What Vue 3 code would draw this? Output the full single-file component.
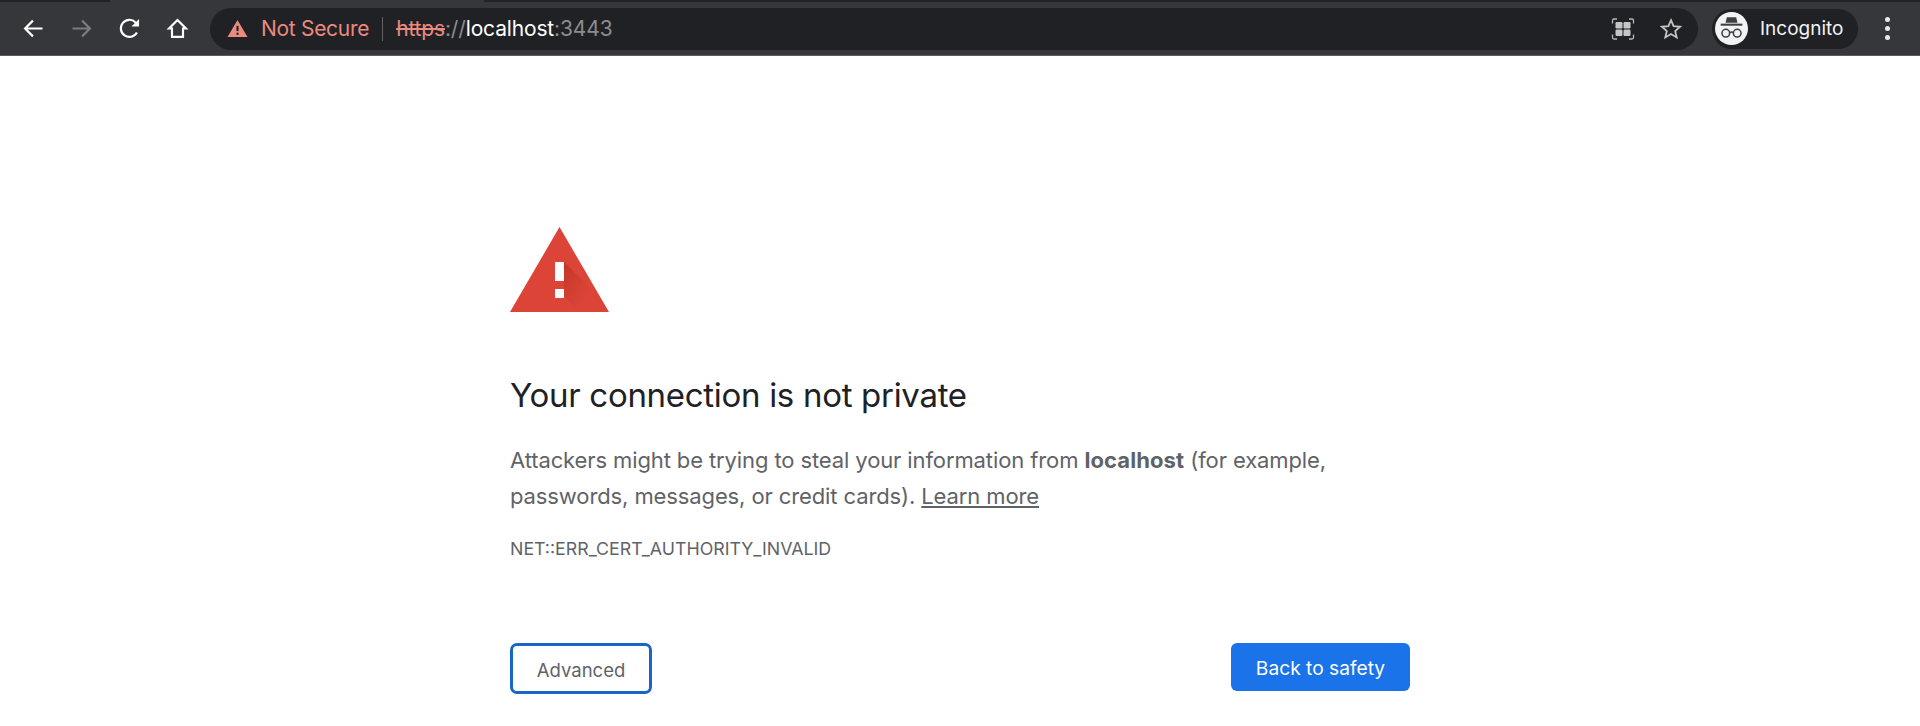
<template>
  <div class="page">
    <header class="toolbar">
      <div class="tabs-edge">
        <span class="tabs-edge__dark tabs-edge__dark--left"></span>
        <span class="tabs-edge__dark tabs-edge__dark--right"></span>
      </div>
      <div class="toolbar__row">
        <nav class="nav">
          <button type="button" class="nav__btn" aria-label="Back">
            <svg viewBox="0 0 24 24" width="27" height="27"><path d="M20 12H5M11.500 5 4.500 12l7 7" fill="none" stroke="#fff" stroke-width="1.900" /></svg>
          </button>
          <button type="button" class="nav__btn" aria-label="Forward">
            <svg viewBox="0 0 24 24" width="27" height="27"><path d="M4 12h15M12.500 5l7 7-7 7" fill="none" stroke="#7b7c7f" stroke-width="1.900" /></svg>
          </button>
          <button type="button" class="nav__btn" aria-label="Reload">
            <svg viewBox="0 0 24 24" width="27" height="27"><path d="M18.600 15.500A7.600 7.600 0 1 1 17.400 6.600L19.500 8.600" fill="none" stroke="#fff" stroke-width="1.900" /><path d="M20.500 3.500v6.800h-6.800z" fill="#fff" /></svg>
          </button>
          <button type="button" class="nav__btn" aria-label="Home">
            <svg viewBox="0 0 24 24" width="27" height="27"><path d="M12 4.500 4.500 12h2.600v7.500h9.800V12h2.600z" fill="none" stroke="#fff" stroke-width="1.900" /></svg>
          </button>
        </nav>

        <div class="omnibox">
          <svg class="omnibox__warn" viewBox="0 0 20 18" width="21" height="19">
            <path d="M10 1 19.500 17H.5z" fill="#ea8a80" />
            <rect x="9" y="6.500" width="2" height="5" fill="#202124" />
            <rect x="9" y="13" width="2" height="2" fill="#202124" />
          </svg>
          <span class="omnibox__status">Not Secure</span>
          <span class="omnibox__sep"></span>
          <span class="omnibox__url"><s class="omnibox__scheme">https</s><span class="omnibox__dim">://</span><span class="omnibox__host">localhost</span><span class="omnibox__dim">:3443</span></span>
          <span class="omnibox__spacer"></span>
          <svg class="omnibox__icon" viewBox="0 0 24 24" width="24" height="24">
            <path d="M1.500 6.500V3.500A1.500 1.500 0 0 1 3 2h3M18 2h3a1.500 1.500 0 0 1 1.500 1.500v3M1.500 17.500v3A1.500 1.500 0 0 0 3 22h3M18 22h3a1.500 1.500 0 0 0 1.500-1.500v-3" fill="none" stroke="#b5b6b8" stroke-width="1.300" />
            <rect x="4.500" y="5" width="7" height="6.500" rx="1.200" fill="#c4c5c7" />
            <rect x="12.500" y="5" width="7" height="6.500" rx="1.200" fill="#c4c5c7" />
            <rect x="4.500" y="12.500" width="7" height="6.500" rx="1.200" fill="#c4c5c7" />
            <rect x="12.500" y="12.500" width="7" height="6.500" rx="1.200" fill="#c4c5c7" />
          </svg>
          <svg class="omnibox__icon omnibox__star" viewBox="0 0 24 24" width="24" height="24">
            <path d="m12 3.200 2.600 6 6.500.6-4.900 4.300 1.500 6.400L12 17.100l-5.700 3.400 1.500-6.400-4.900-4.300 6.500-.6z" fill="none" stroke="#c4c5c7" stroke-width="1.800" />
          </svg>
        </div>

        <div class="profile">
          <span class="profile__avatar">
            <svg viewBox="0 0 30 30" width="31" height="31">
              <path d="M10.500 4h9l1.300 5.500H9.200z" fill="#3c4043" />
              <rect x="4.500" y="10.300" width="21" height="2" fill="#3c4043" />
              <circle cx="9.500" cy="19.500" r="3.700" fill="none" stroke="#3c4043" stroke-width="1.500" />
              <circle cx="20.500" cy="19.500" r="3.700" fill="none" stroke="#3c4043" stroke-width="1.500" />
              <path d="M13 19c1.300-.9 2.700-.9 4 0" fill="none" stroke="#3c4043" stroke-width="1.500" />
            </svg>
          </span>
          <span class="profile__label">Incognito</span>
        </div>

        <button type="button" class="menu" aria-label="Menu">
          <span></span><span></span><span></span>
        </button>
      </div>
    </header>

    <main class="interstitial">
      <svg class="interstitial__icon" viewBox="0 0 99 85" width="99" height="85">
        <defs>
          <linearGradient id="warn-shadow" x1="0" y1="0" x2="1" y2="1">
            <stop offset="0" stop-color="#a52714" stop-opacity=".45" />
            <stop offset=".65" stop-color="#a52714" stop-opacity="0" />
          </linearGradient>
        </defs>
        <path d="M49.500 0 99 85H0z" fill="#db4437" />
        <path d="M54 35 90 71v14H70L54 69z" fill="url(#warn-shadow)" />
        <rect x="45" y="35" width="9" height="19" fill="#fff" />
        <rect x="45" y="62" width="9" height="9" fill="#fff" />
      </svg>

      <h1 class="interstitial__title">Your connection is not private</h1>
      <p class="interstitial__text">
        Attackers might be trying to steal your information from <strong>localhost</strong> (for example,
        passwords, messages, or credit cards). <a class="interstitial__link">Learn more</a>
      </p>
      <p class="interstitial__code">NET::ERR_CERT_AUTHORITY_INVALID</p>

      <div class="interstitial__actions">
        <button type="button" class="btn btn--advanced">Advanced</button>
        <button type="button" class="btn btn--primary">Back to safety</button>
      </div>
    </main>
  </div>
</template>

<script setup>
</script>

<style>
html,
body {
  background: #fff;
}
</style>

<style scoped>
.page {
  height: 726px;
  overflow: hidden;
  font-family: "Inter", "Liberation Sans", sans-serif;
  background: #fff;
}

.toolbar {
  height: 56px;
  box-sizing: border-box;
  background: #36373b;
  border-bottom: 1px solid #5a5b5e;
}

.tabs-edge {
  display: flex;
  justify-content: space-between;
  height: 2px;
}

.tabs-edge__dark {
  display: block;
  height: 2px;
  background: #222327;
}

.tabs-edge__dark--left {
  width: 110px;
}

.tabs-edge__dark--right {
  width: 1436px;
}

.toolbar__row {
  display: flex;
  align-items: center;
  height: 53px;
  padding-left: 20px;
}

.nav {
  display: flex;
  gap: 21px;
}

.nav__btn {
  width: 27px;
  height: 27px;
  padding: 0;
  border: 0;
  background: transparent;
}

.omnibox {
  display: flex;
  align-items: center;
  width: 1488px;
  height: 42px;
  margin-left: 19px;
  padding-left: 17px;
  box-sizing: border-box;
  border-radius: 21px;
  background: #202124;
}

.omnibox__warn {
  flex: none;
}

.omnibox__status {
  margin-left: 13px;
  color: #ea8a80;
  font-size: 21px;
  letter-spacing: -0.3px;
}

.omnibox__sep {
  width: 1px;
  height: 24px;
  margin: 0 13px;
  background: #5f6063;
}

.omnibox__url {
  font-size: 21px;
  letter-spacing: -0.15px;
  white-space: nowrap;
}

.omnibox__scheme {
  color: #ea8a80;
}

.omnibox__dim {
  color: #8b8c8f;
}

.omnibox__host {
  color: #fff;
}

.omnibox__spacer {
  flex: 1;
}

.omnibox__star {
  margin: 0 15px 0 24px;
}

.profile {
  display: flex;
  align-items: center;
  gap: 12px;
  width: 146px;
  height: 40px;
  margin-left: 14px;
  padding-left: 3px;
  box-sizing: border-box;
  border-radius: 20px;
  background: #202124;
}

.profile__avatar {
  display: flex;
  align-items: center;
  justify-content: center;
  width: 33px;
  height: 33px;
  border-radius: 50%;
  background: #f1f3f4;
}

.profile__label {
  color: #f1f3f4;
  font-size: 19px;
}

.menu {
  display: flex;
  flex-direction: column;
  gap: 4px;
  margin-left: 27px;
  padding: 0;
  border: 0;
  background: transparent;
}

.menu span {
  width: 5px;
  height: 5px;
  border-radius: 50%;
  background: #e8eaed;
}

.interstitial {
  width: 900px;
  margin-left: 510px;
  padding-top: 171px;
}

.interstitial__icon {
  display: block;
}

.interstitial__title {
  margin: 62px 0 0;
  color: #202124;
  font-size: 33px;
  font-weight: 400;
  line-height: 42px;
  letter-spacing: -0.3px;
}

.interstitial__text {
  margin: 26px 0 0;
  color: #5f6368;
  font-size: 22px;
  line-height: 36px;
  letter-spacing: -0.11px;
}

.interstitial__text strong {
  font-weight: 700;
  letter-spacing: 0.1px;
}

.interstitial__link {
  color: #5f6368;
  text-decoration: underline;
}

.interstitial__code {
  margin: 24px 0 0;
  color: #5f6368;
  font-size: 17.800px;
  line-height: 22px;
}

.interstitial__actions {
  display: flex;
  align-items: flex-start;
  justify-content: space-between;
  margin-top: 83px;
}

.btn {
  box-sizing: border-box;
  padding: 2px 0 0;
  font-family: inherit;
}

.btn--advanced {
  width: 142px;
  height: 51px;
  border: 3px solid #1a66c4;
  border-radius: 7px;
  background: #fff;
  color: #5f6368;
  font-size: 18.500px;
}

.btn--primary {
  width: 179px;
  height: 48px;
  border: 0;
  border-radius: 6px;
  background: #1a73e8;
  color: #fff;
  font-size: 19.200px;
}
</style>
